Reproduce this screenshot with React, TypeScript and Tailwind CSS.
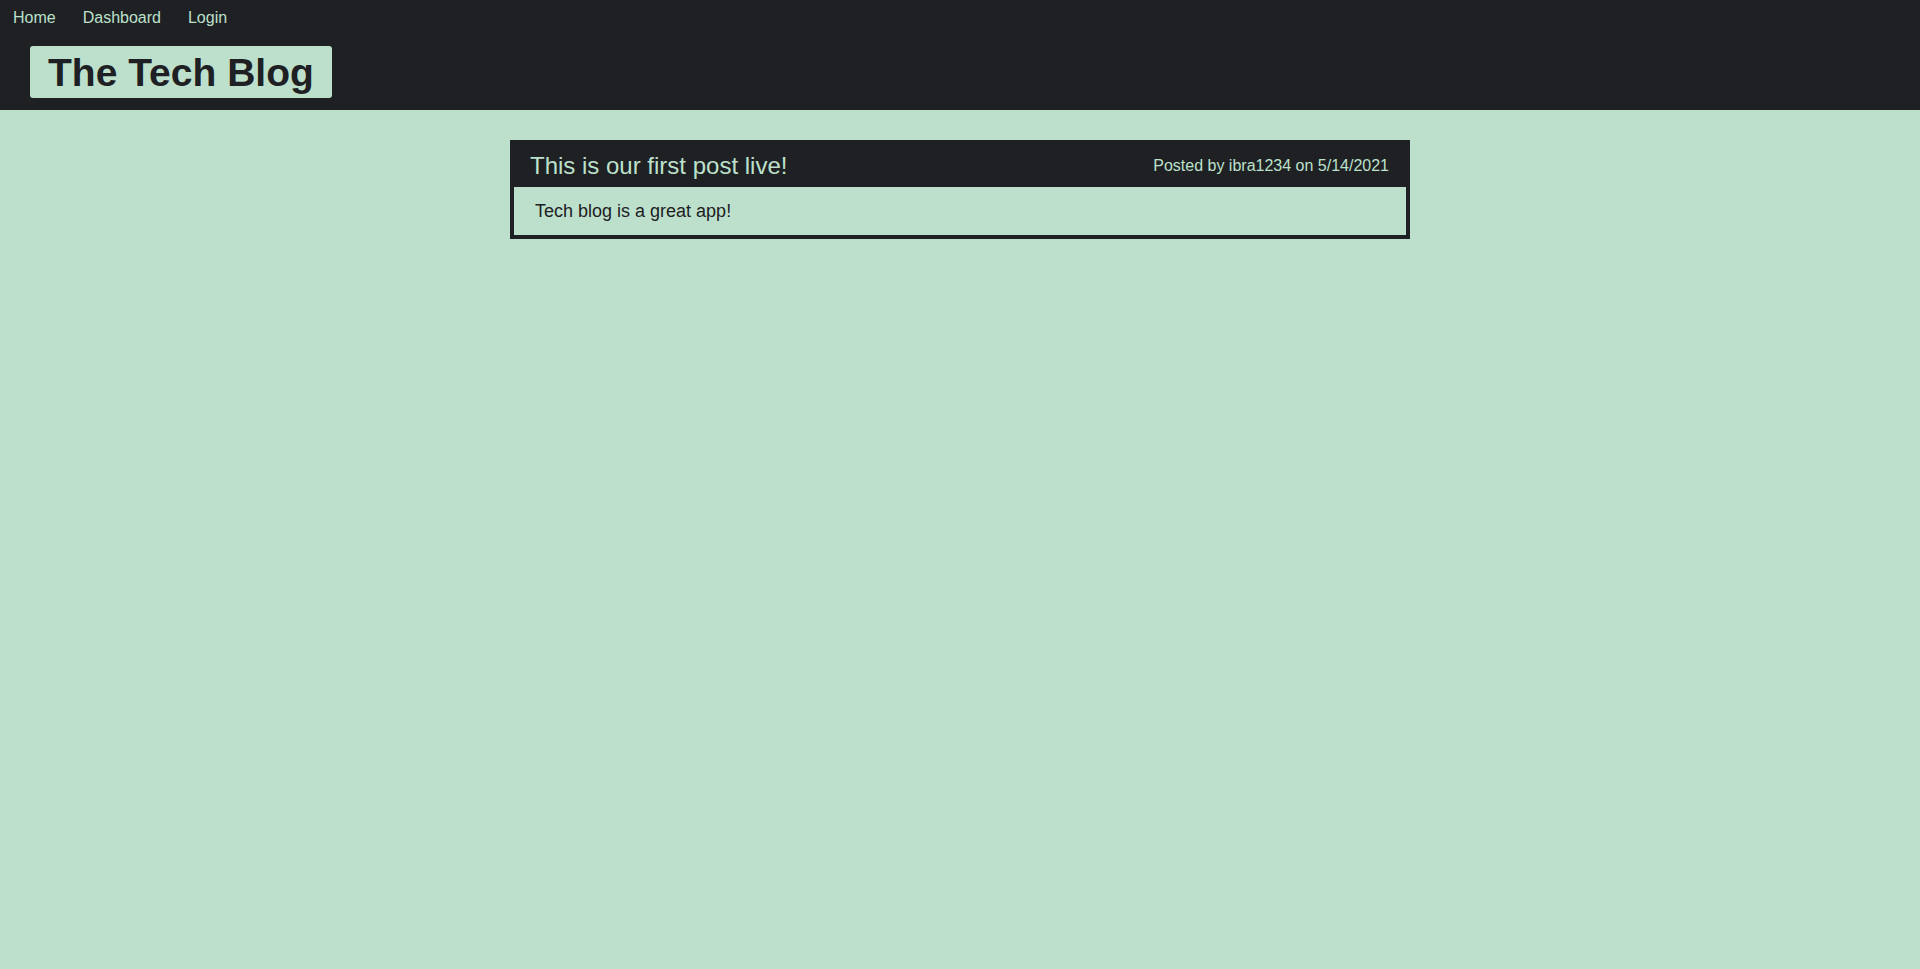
import React from "react";

export default function App() {
  return (
    <div className="min-h-[969px] w-full bg-[#bde0cc] font-['Liberation_Sans',Arial,sans-serif]">
      <header className="h-[110px] bg-[#1e2023] pt-[6px]">
        <nav className="flex pl-[13px] text-[16px] leading-[24px] text-[#bde0cc]">
          <a className="mr-[27px]">Home</a>
          <a className="mr-[27px]">Dashboard</a>
          <a>Login</a>
        </nav>
        <div className="mt-[16px] pl-[30px]">
          <h1 className="inline-flex h-[52px] items-center rounded-[3px] bg-[#bde0cc] px-[18px] text-[39px] font-bold leading-none text-[#1e2023]">
            The Tech Blog
          </h1>
        </div>
      </header>
      <main className="flex justify-center pt-[30px]">
        <article className="w-[900px] border-4 border-[#1e2023]">
          <div className="flex h-[43px] items-center justify-between bg-[#1e2023] pl-[16px] pr-[17px] text-[#bde0cc]">
            <h2 className="text-[24px] leading-none">This is our first post live!</h2>
            <p className="text-[16px] leading-none">Posted by ibra1234 on 5/14/2021</p>
          </div>
          <div className="flex h-[48px] items-center pl-[21px] text-[18px] text-[#1e2023]">
            Tech blog is a great app!
          </div>
        </article>
      </main>
    </div>
  );
}
